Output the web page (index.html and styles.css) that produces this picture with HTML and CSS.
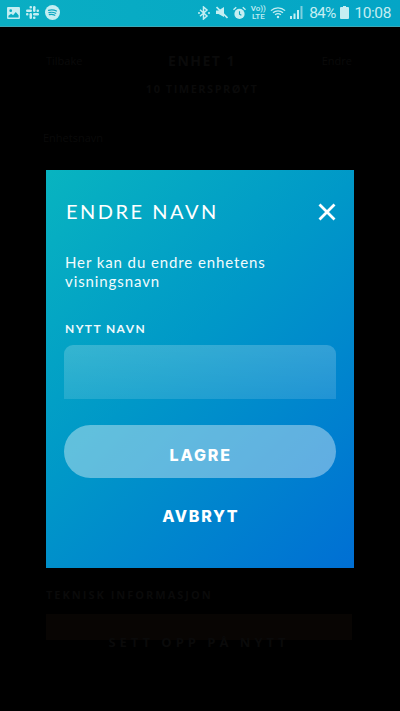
FILE: index.html
```html
<!DOCTYPE html>
<html lang="no">
<head>
<meta charset="utf-8">
<title>Endre navn</title>
<link rel="stylesheet" href="styles.css">
</head>
<body>
<div class="screen">
  <header class="status">
    <div class="status-left">
      <svg class="ic" width="13" height="12" viewBox="0 0 14 13"><path fill="#c4eef2" fill-rule="evenodd" d="M1 0h12a1 1 0 0 1 1 1v11a1 1 0 0 1-1 1H1a1 1 0 0 1-1-1V1a1 1 0 0 1 1-1zm.5 9.500v2h11V9L9.500 5.500 6.500 9 4.500 7.300zM4 2.500a1.500 1.500 0 1 0 0 3 1.500 1.500 0 0 0 0-3z"/></svg>
      <svg class="ic" width="13" height="13" viewBox="0 0 13 13" fill="#c4eef2"><rect x="0" y="3.500" width="6" height="2.500" rx="1.250"/><rect x="3.500" y="0" width="2.500" height="2.500" rx="1"/><rect x="7" y="0" width="2.500" height="6" rx="1.250"/><rect x="10.500" y="3.500" width="2.500" height="2.500" rx="1"/><rect x="7" y="7" width="6" height="2.500" rx="1.250"/><rect x="7" y="10.500" width="2.500" height="2.500" rx="1"/><rect x="3.500" y="7" width="2.500" height="6" rx="1.250"/><rect x="0" y="7" width="2.500" height="2.500" rx="1"/></svg>
      <svg class="ic" width="15" height="15" viewBox="0 0 15 15"><circle cx="7.500" cy="7.500" r="7.500" fill="#c4eef2"/><path d="M3.500 5.300c2.700-.8 5.500-.6 8 .7M3.900 7.600c2.300-.6 4.600-.4 6.800.7M4.300 9.700c1.900-.5 3.800-.3 5.500.6" fill="none" stroke="#0aa6c0" stroke-width="1.200" stroke-linecap="round"/></svg>
    </div>
    <div class="status-right">
      <svg class="ic" width="12" height="14" viewBox="0 0 12 14"><path d="M2 3.800l7 6.200-3.500 3V1L9 4l-7 6.200" fill="none" stroke="#c4eef2" stroke-width="1.500"/><circle cx="1" cy="7" r="1" fill="#c4eef2"/><circle cx="11" cy="7" r="1" fill="#c4eef2"/></svg>
      <svg class="ic ic-mute" width="12" height="13" viewBox="0 0 12 13"><path fill="#c4eef2" d="M0 4.500h2.500L8 1v10L2.500 8H0z"/><path d="M.5 1l11 11" stroke="#c4eef2" stroke-width="1.700"/></svg>
      <svg class="ic ic-alarm" width="13" height="14" viewBox="0 0 14 14"><circle cx="7" cy="8" r="5.500" fill="#c4eef2"/><path d="M7 5v3.300l2 1.200" fill="none" stroke="#0aa6c0" stroke-width="1.200"/><path d="M.5 3.500L3.500.8M13.500 3.500L10.500.8" stroke="#c4eef2" stroke-width="1.500"/></svg>
      <div class="volte"><span>Vo))</span><span>LTE</span></div>
      <svg class="ic ic-wifi" width="16" height="13" viewBox="0 0 17 13"><path d="M1 4.500c4.200-4 10.800-4 15 0M3.200 6.800c3-2.800 7.600-2.800 10.600 0M5.400 9c1.800-1.500 4.400-1.500 6.200 0" fill="none" stroke="#c4eef2" stroke-width="1.400"/><circle cx="8.500" cy="11.300" r="1.300" fill="#c4eef2"/></svg>
      <svg class="ic ic-signal" width="13" height="13" viewBox="0 0 13 13"><rect x="0" y="10" width="2" height="3" fill="#c4eef2"/><rect x="3.500" y="7.500" width="2" height="5.500" fill="#c4eef2"/><rect x="7" y="4" width="2" height="9" fill="#c4eef2"/><rect x="10.500" y="0" width="2" height="13" fill="#7fd0de"/></svg>
      <span class="pct">84%</span>
      <svg class="ic ic-batt" width="9" height="13" viewBox="0 0 9 13"><path fill="#c4eef2" d="M3 0h3v1h2a1 1 0 0 1 1 1v10a1 1 0 0 1-1 1H1a1 1 0 0 1-1-1V2a1 1 0 0 1 1-1h2z"/></svg>
      <span class="time">10:08</span>
    </div>
  </header>

  <main class="behind">
    <div class="behind-top">
      <span class="behind-side">Tilbake</span>
      <div class="behind-title">
        <span class="behind-name">ENHET 1</span>
        <span class="behind-sub">10 TIMERSPRØYT</span>
      </div>
      <span class="behind-side">Endre</span>
    </div>
    <p class="behind-label">Enhetsnavn</p>
    <div class="behind-spacer"></div>
    <p class="behind-heading">TEKNISK INFORMASJON</p>
    <div class="behind-btn">SETT OPP PÅ NYTT</div>
  </main>

  <section class="modal">
    <div class="modal-head">
      <h1 class="modal-title">ENDRE NAVN</h1>
      <svg class="close" width="18" height="18" viewBox="0 0 18 18"><path d="M1.500 1.500l15 15M16.500 1.500l-15 15" fill="none" stroke="#fff" stroke-width="2.800"/></svg>
    </div>
    <p class="modal-text">Her kan du endre enhetens visningsnavn</p>
    <label class="field-label">NYTT NAVN</label>
    <div class="field"></div>
    <div class="save">LAGRE</div>
    <div class="cancel">AVBRYT</div>
  </section>
</div>
</body>
</html>
```
FILE: styles.css
```css
* { box-sizing: border-box; }
html, body { margin: 0; padding: 0; }
body { width: 400px; height: 711px; overflow: hidden; background: #000; font-family: Lato, sans-serif; }
.screen { position: relative; width: 400px; height: 711px; background: #000; }

.status { height: 27px; display: flex; justify-content: space-between; align-items: center; padding: 0 9px 1px 7px; background: linear-gradient(90deg, #0aaec3, #04a5c6); border-bottom: 1px solid #3aa9b8; color: #c4eef2; }
.status-left, .status-right { display: flex; align-items: center; }
.status-left { gap: 6px; }
.ic { display: block; flex: none; }
.ic-mute { margin-left: 6px; }
.ic-alarm { margin-left: 5px; }
.ic-wifi { margin-left: 5px; }
.ic-signal { margin-left: 4px; }
.volte { display: flex; flex-direction: column; align-items: center; width: 14px; margin-left: 5px; font: 500 8px/7.500px Roboto, sans-serif; }
.pct { margin-left: 6px; font: 400 15.500px/16px Roboto, sans-serif; letter-spacing: -.9px; }
.ic-batt { margin-left: 5px; }
.time { margin-left: 5px; font: 400 15.500px/16px Roboto, sans-serif; letter-spacing: -.4px; }

.behind { display: flex; flex-direction: column; padding: 24px 48px 0 46px; color: #0a0a0a; font-family: "Open Sans", sans-serif; }
.behind-top { display: flex; justify-content: space-between; }
.behind-side { font-size: 11px; line-height: 20px; }
.behind-title { display: flex; flex-direction: column; align-items: center; font-weight: 700; letter-spacing: 1.500px; }
.behind-name { font-size: 14px; line-height: 20px; }
.behind-sub { font-size: 11px; line-height: 18px; margin-top: 9px; }
.behind-label { margin: 33px 0 0 -3px; font-size: 11px; line-height: 14px; }
.behind-spacer { height: 443px; }
.behind-heading { margin: 0; font-size: 11px; font-weight: 700; letter-spacing: 2px; line-height: 14px; }
.behind-btn { margin-top: 12px; height: 26px; padding-top: 20px; background: #080503; text-align: center; font-size: 13px; line-height: 16px; font-weight: 700; letter-spacing: 4px; }

.modal { position: absolute; left: 46px; top: 170px; width: 307.500px; height: 397.500px; padding: 0 18px; display: flex; flex-direction: column; background: linear-gradient(135deg, #08b4c0 0%, #0098c8 45%, #006fd4 100%); color: #fff; }
.modal-head { display: flex; justify-content: space-between; align-items: center; margin-top: 29px; padding: 0 0 0 2px; height: 26px; }
.modal-title { margin: -2px 0 0; font-size: 20px; font-weight: 400; line-height: 26px; letter-spacing: 2.500px; }
.modal-text { margin: 28px 0 0 1px; font-size: 15px; line-height: 19px; letter-spacing: .9px; color: #f2fbfd; }
.field-label { margin-top: 31px; margin-left: 1px; font-size: 12px; line-height: 14px; font-weight: 700; letter-spacing: 1.400px; color: #eef9fc; }
.field { margin-top: 9px; height: 54px; border-radius: 9px 9px 0 0; background: linear-gradient(rgba(255, 255, 255, .2), rgba(255, 255, 255, .13)); }
.save { margin-top: 26px; height: 53px; border-radius: 27px; background: rgba(255, 255, 255, .38); display: flex; align-items: center; justify-content: center; padding: 6px 0 0 2px; font: 800 16px/1 Inter, sans-serif; letter-spacing: 1.900px; }
.cancel { margin-top: 29px; padding-left: 2px; text-align: center; font: 800 16px/18px Inter, sans-serif; letter-spacing: 1.700px; }
```
